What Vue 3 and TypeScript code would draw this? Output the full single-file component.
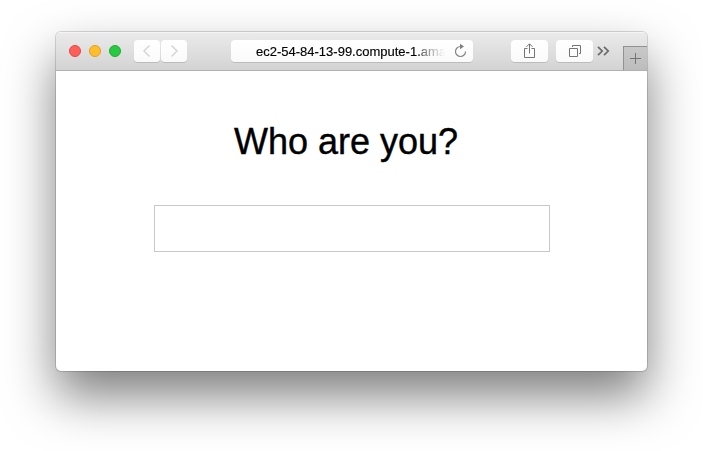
<script setup lang="ts">
import { ref } from 'vue'

const address = ref('ec2-54-84-13-99.compute-1.amazonaws.com')
const name = ref('')
const lights: string[] = ['close', 'minimise', 'expand']
</script>

<template>
  <main class="desktop">
    <section class="window">
      <header class="toolbar">
        <div class="lights">
          <span v-for="light in lights" :key="light" class="light" :class="light"></span>
        </div>
        <nav class="history">
          <button class="tool nav">
            <svg width="26" height="22" viewBox="0 0 26 22"><path d="M15.5 5.5 10 11l5.500 5.500" /></svg>
          </button>
          <button class="tool nav">
            <svg width="26" height="22" viewBox="0 0 26 22"><path d="M10.500 5.500 16 11l-5.500 5.500" /></svg>
          </button>
        </nav>
        <div class="tool address">
          <span class="url">{{ address }}</span>
          <svg class="reload" width="14" height="14" viewBox="0 0 14 14">
            <path d="M7.500 2.500A5 5 0 1 0 12.500 7.500" />
            <path class="head" d="M7 -.2v5.400L11 2.600z" />
          </svg>
        </div>
        <div class="actions">
          <button class="tool action">
            <svg width="37" height="22" viewBox="0 0 37 22">
              <path d="M16.500 8.500h-3v9h10v-9h-3M18.500 13.500V4M15.500 6.800l3-3 3 3" />
            </svg>
          </button>
          <button class="tool action">
            <svg width="37" height="22" viewBox="0 0 37 22">
              <path d="M13.500 8.500h8v8h-8zM16.500 7V5.500h8v8H23" />
            </svg>
          </button>
        </div>
        <svg class="more" width="13" height="10" viewBox="0 0 13 10">
          <path d="M1 .8 5.200 5 1 9.200M7 .8 11.200 5 7 9.200" />
        </svg>
        <button class="new-tab">
          <svg width="23" height="23" viewBox="0 0 23 23"><path d="M11.500 6v11M6 11.500h11" /></svg>
        </button>
      </header>
      <div class="page">
        <h1>Who are you?</h1>
        <input v-model="name" type="text" />
      </div>
    </section>
  </main>
</template>

<style>
body {
  margin: 0;
  background: #fff;
}
</style>

<style scoped>
.desktop {
  box-sizing: border-box;
  height: 451px;
  padding: 32px 56px 80px;
  overflow: hidden;
  font-family: "Liberation Sans", Arial, sans-serif;
}
.window {
  width: 591px;
  height: 339px;
  border-radius: 5px;
  overflow: hidden;
  background: #fff;
  box-shadow: 0 0 0 1px rgba(0, 0, 0, 0.15), 0 25px 50px rgba(0, 0, 0, 0.51);
}
.toolbar {
  box-sizing: border-box;
  height: 39px;
  display: flex;
  align-items: flex-start;
  padding: 8px 0 0 13px;
  background: linear-gradient(#ebebeb, #d3d3d3);
  border-bottom: 1px solid #b1b1b1;
  box-shadow: inset 0 1px #f4f4f4;
}
.lights {
  display: flex;
  gap: 8px;
  padding-top: 5px;
}
.light {
  box-sizing: border-box;
  width: 12px;
  height: 12px;
  border-radius: 50%;
  border: 1px solid;
}
.close {
  background: #ff5f57;
  border-color: #e2463f;
}
.minimise {
  background: #ffbd2e;
  border-color: #dfa023;
}
.expand {
  background: #28ca41;
  border-color: #1dad2b;
}
svg {
  display: block;
  fill: none;
  stroke: #747474;
  stroke-width: 1;
}
button {
  padding: 0;
  border: 0;
}
.tool {
  height: 22px;
  border-radius: 4px;
  background: linear-gradient(#fff, #fafafa);
  box-shadow: 0 1px rgba(0, 0, 0, 0.13);
}
.history {
  display: flex;
  gap: 1px;
  margin-left: 13px;
}
.nav {
  width: 26px;
}
.nav svg {
  stroke: #d6d6d6;
  stroke-width: 1.5;
}
.address {
  box-sizing: border-box;
  width: 242px;
  margin-left: 44px;
  padding: 0 6px 0 25px;
  display: flex;
  align-items: center;
  justify-content: space-between;
}
.url {
  width: 189px;
  padding-top: 2px;
  overflow: hidden;
  white-space: nowrap;
  font-size: 13px;
  line-height: 22px;
  color: #000;
  -webkit-text-stroke: 0.15px #000;
  mask-image: linear-gradient(to right, #000 162px, rgba(0, 0, 0, 0.5) 168px, transparent 189px);
}
.reload {
  overflow: visible;
  stroke: #858585;
  stroke-width: 1.2;
}
.reload .head {
  fill: #808080;
  stroke: none;
}
.actions {
  display: flex;
  gap: 8px;
  margin-left: 38px;
}
.action {
  width: 37px;
}
.more {
  margin: 6px 0 0 4px;
  stroke: #6a6a6a;
  stroke-width: 1.7;
}
.new-tab {
  box-sizing: border-box;
  width: 24px;
  height: 24px;
  margin: 6px 0 0 auto;
  border: solid #929292;
  border-width: 1px 0 0 1px;
  background: linear-gradient(#c8c8c8, #bdbdbd);
}
.page {
  display: flex;
  flex-direction: column;
  align-items: center;
  padding-top: 50px;
}
h1 {
  margin: 0 11px 0 0;
  font-size: 36px;
  line-height: 42px;
  font-weight: 400;
  color: #000;
  -webkit-text-stroke: 0.4px #000;
}
input {
  box-sizing: border-box;
  width: 396px;
  height: 47px;
  margin: 42px 0 0 1px;
  padding: 8px 12px;
  border: 1px solid #c8c8c8;
  background: #fff;
  font: 24px "Liberation Sans", Arial, sans-serif;
  outline: none;
}
</style>
